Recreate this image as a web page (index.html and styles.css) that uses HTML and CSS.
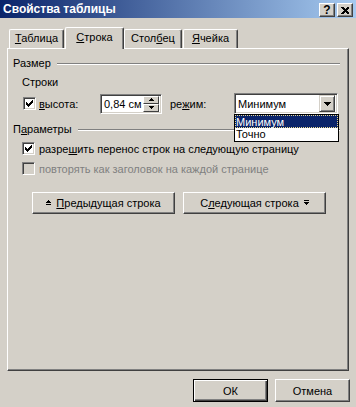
FILE: index.html
```html
<!DOCTYPE html>
<html lang="ru">
<head>
    <meta charset="UTF-8">
    <title>Свойства таблицы</title>
    <link rel="stylesheet" href="styles.css">
</head>
<body>
<div class="dialog">
    <div class="titlebar">
        <span class="title">Свойства таблицы</span>
        <div class="caption-btns">
            <span class="cap-btn">?</span>
            <span class="cap-btn">
                <svg width="8" height="7" viewBox="0 0 8 7" shape-rendering="crispEdges"><path d="M0 0h2l2 2 2-2h2v1l-2.5 2.5 2.5 2.5v1h-2l-2-2-2 2h-2v-1l2.5-2.5-2.5-2.5z" fill="#000"/></svg>
            </span>
        </div>
    </div>

    <div class="tabs">
        <div class="tab tab-table"><u>Т</u>аблица</div>
        <div class="tab tab-row active"><u>С</u>трока</div>
        <div class="tab tab-col">Стол<u>б</u>ец</div>
        <div class="tab tab-cell"><u>Я</u>чейка</div>
    </div>

    <div class="panel">
        <div class="group-head">
            <span>Размер</span>
            <i class="groove"></i>
        </div>
        <div class="subhead">Строки</div>

        <div class="height-row">
            <span class="check">
                <svg width="7" height="7" viewBox="0 0 7 7" shape-rendering="crispEdges"><path d="M0 2h1v3h-1zM1 3h1v3h-1zM2 4h1v3h-1zM3 3h1v3h-1zM4 2h1v3h-1zM5 1h1v3h-1zM6 0h1v3h-1z" fill="#000"/></svg>
            </span>
            <span class="lbl-height"><u>в</u>ысота:</span>
            <div class="spin-input">
                <span class="spin-val">0,84 см</span>
                <div class="spin">
                    <span class="spin-btn"><svg width="5" height="3" viewBox="0 0 5 3" shape-rendering="crispEdges"><path d="M2 0h1v1h1v1h1v1h-5v-1h1v-1h1z" fill="#000"/></svg></span>
                    <span class="spin-btn"><svg width="5" height="3" viewBox="0 0 5 3" shape-rendering="crispEdges"><path d="M0 0h5v1h-1v1h-1v1h-1v-1h-1v-1h-1z" fill="#000"/></svg></span>
                </div>
            </div>
            <span class="lbl-mode">ре<u>ж</u>им:</span>
            <div class="combo">
                <span class="combo-val">Минимум</span>
                <span class="combo-btn"><svg width="7" height="4" viewBox="0 0 7 4" shape-rendering="crispEdges"><path d="M0 0h7v1h-1v1h-1v1h-1v1h-1v-1h-1v-1h-1v-1h-1z" fill="#000"/></svg></span>
                <ul class="combo-list">
                    <li class="selected">Минимум</li>
                    <li>Точно</li>
                </ul>
            </div>
        </div>

        <div class="group-head params">
            <span>П<u>а</u>раметры</span>
            <i class="groove"></i>
        </div>

        <div class="check-row">
            <span class="check">
                <svg width="7" height="7" viewBox="0 0 7 7" shape-rendering="crispEdges"><path d="M0 2h1v3h-1zM1 3h1v3h-1zM2 4h1v3h-1zM3 3h1v3h-1zM4 2h1v3h-1zM5 1h1v3h-1zM6 0h1v3h-1z" fill="#000"/></svg>
            </span>
            <span>разре<u>ш</u>ить перенос строк на следующую страницу</span>
        </div>
        <div class="check-row disabled">
            <span class="check"></span>
            <span>повторять как заголовок на каждой странице</span>
        </div>

        <div class="nav-btns">
            <div class="btn nav-btn">
                <svg width="5" height="6" viewBox="0 0 5 6" shape-rendering="crispEdges"><path d="M2 0h1v1h1v1h1v1h-5v-1h1v-1h1zM0 4h5v1h-5z" fill="#000"/></svg>
                <span><u>П</u>редыдущая строка</span>
            </div>
            <div class="btn nav-btn">
                <span>С<u>л</u>едующая строка</span>
                <svg width="5" height="6" viewBox="0 0 5 6" shape-rendering="crispEdges"><path d="M0 0h5v1h-5zM0 2h5v1h-1v1h-1v1h-1v-1h-1v-1h-1z" fill="#000"/></svg>
            </div>
        </div>
    </div>

    <div class="footer">
        <div class="btn default">ОК</div>
        <div class="btn">Отмена</div>
    </div>
</div>
</body>
</html>
```

FILE: styles.css
```css
*{
    margin:0;
    padding:0;
    list-style:none;
    box-sizing:border-box;
}
body{
    background:#d4d0c8;
    font-family:"Liberation Sans", Arial, sans-serif;
    font-size:11px;
    color:#000;
}
u{
    text-decoration:underline;
    text-underline-offset:1px;
}
.dialog{
    width:356px;
    height:407px;
}
/* title bar */
.titlebar{
    height:18px;
    display:flex;
    align-items:center;
    justify-content:space-between;
    padding:0 3px 0 3px;
    background:linear-gradient(to right, #0a246a, #a6caf0);
}
.title{
    color:#fff;
    font-weight:bold;
    font-size:12px;
}
.caption-btns{
    display:flex;
    gap:2px;
    margin-top:2px;
}
.cap-btn{
    width:16px;
    height:14px;
    display:flex;
    align-items:center;
    justify-content:center;
    font-weight:bold;
    font-size:12px;
    background:#d4d0c8;
    border:1px solid;
    border-color:#fff #404040 #404040 #fff;
    box-shadow:inset -1px -1px #808080;
}
/* tabs */
.tabs{
    display:flex;
    align-items:flex-end;
    height:30px;
    padding-left:9px;
}
.tab{
    height:19px;
    line-height:17px;
    text-align:center;
    border-top:1px solid #fff;
    border-left:1px solid #fff;
    border-right:1px solid #404040;
    border-top-left-radius:2px;
    border-top-right-radius:2px;
    box-shadow:inset -1px 0 #808080;
    background:#d4d0c8;
}
.tab-table{ width:55px; }
.tab-row{ width:59px; margin-left:1px; }
.tab-col{ width:58px; }
.tab-cell{ width:55px; margin-left:1px; }
.tab.active{
    height:22px;
    line-height:19px;
    margin-bottom:-1px;
    position:relative;
    z-index:1;
}
/* panel */
.panel{
    height:323px;
    margin:0 7px;
    padding:8px 8px 0 5px;
    border:1px solid;
    border-color:#fff #404040 #404040 #fff;
    box-shadow:inset -1px -1px #808080;
}
.group-head{
    display:flex;
    align-items:center;
    height:13px;
    line-height:13px;
}
.groove{
    flex:1;
    margin-left:6px;
    height:2px;
    border-top:1px solid #808080;
    border-bottom:1px solid #fff;
}
.subhead{
    margin:6px 0 0 9px;
    height:13px;
    line-height:13px;
}
.check{
    width:13px;
    height:13px;
    flex:none;
    display:flex;
    align-items:center;
    justify-content:center;
    background:#fff;
    border:1px solid;
    border-color:#808080 #fff #fff #808080;
    box-shadow:inset 1px 1px #404040, inset -1px -1px #d4d0c8;
}
.height-row{
    display:flex;
    align-items:center;
    height:21px;
    margin-top:4px;
    padding-left:10px;
}
.lbl-height{
    width:64px;
    padding-left:3px;
}
.spin-input{
    width:62px;
    height:20px;
    display:flex;
    align-items:center;
    justify-content:space-between;
    background:#fff;
    border:1px solid;
    border-color:#808080 #fff #fff #808080;
    box-shadow:inset 1px 1px #404040, inset -1px -1px #d4d0c8;
    padding:2px 2px 2px 3px;
}
.spin{
    display:flex;
    flex-direction:column;
    width:16px;
    height:16px;
}
.spin-btn{
    flex:1;
    display:flex;
    align-items:center;
    justify-content:center;
    background:#d4d0c8;
    border:1px solid;
    border-color:#fff #404040 #404040 #fff;
}
.lbl-mode{
    width:72px;
    padding-left:8px;
}
.combo{
    position:relative;
    width:104px;
    height:21px;
    display:flex;
    align-items:center;
    justify-content:space-between;
    background:#fff;
    border:1px solid;
    border-color:#808080 #fff #fff #808080;
    box-shadow:inset 1px 1px #404040, inset -1px -1px #d4d0c8;
    padding:2px;
}
.combo-val{
    padding-left:1px;
}
.combo-btn{
    width:16px;
    height:17px;
    display:flex;
    align-items:center;
    justify-content:center;
    background:#d4d0c8;
    border:1px solid;
    border-color:#d4d0c8 #404040 #404040 #d4d0c8;
    box-shadow:inset 1px 1px #fff, inset -1px -1px #808080;
}
/* open dropdown list, drawn over the panel */
.combo-list{
    position:absolute;
    left:-1px;
    top:20px;
    width:105px;
    background:#fff;
    border:1px solid #000;
    z-index:2;
}
.combo-list li{
    height:13px;
    line-height:12px;
    padding-left:1px;
}
.combo-list li.selected{
    background:#0a246a;
    color:#fff;
    border:1px dotted #e8d890;
    padding-left:0;
}
.params{
    margin-top:9px;
}
.check-row{
    display:flex;
    align-items:center;
    height:13px;
    margin-top:6px;
    padding-left:9px;
    gap:4px;
}
.check-row + .check-row{
    margin-top:7px;
}
.check-row.disabled{
    color:#808080;
}
.check-row.disabled .check{
    background:#d4d0c8;
}
/* buttons */
.btn{
    display:flex;
    align-items:center;
    justify-content:center;
    gap:5px;
    height:22px;
    background:#d4d0c8;
    border:1px solid;
    border-color:#fff #404040 #404040 #fff;
    box-shadow:inset -1px -1px #808080;
}
.nav-btns{
    display:flex;
    gap:8px;
    margin:17px 0 0 19px;
}
.nav-btn{
    width:143px;
}
.footer{
    display:flex;
    justify-content:flex-end;
    gap:7px;
    padding:8px 6px 0 0;
}
.footer .btn{
    width:75px;
    height:23px;
}
.footer .btn.default{
    border:1px solid #000;
    box-shadow:inset 1px 1px #fff, inset -1px -1px #404040, inset -2px -2px #808080;
}
```
